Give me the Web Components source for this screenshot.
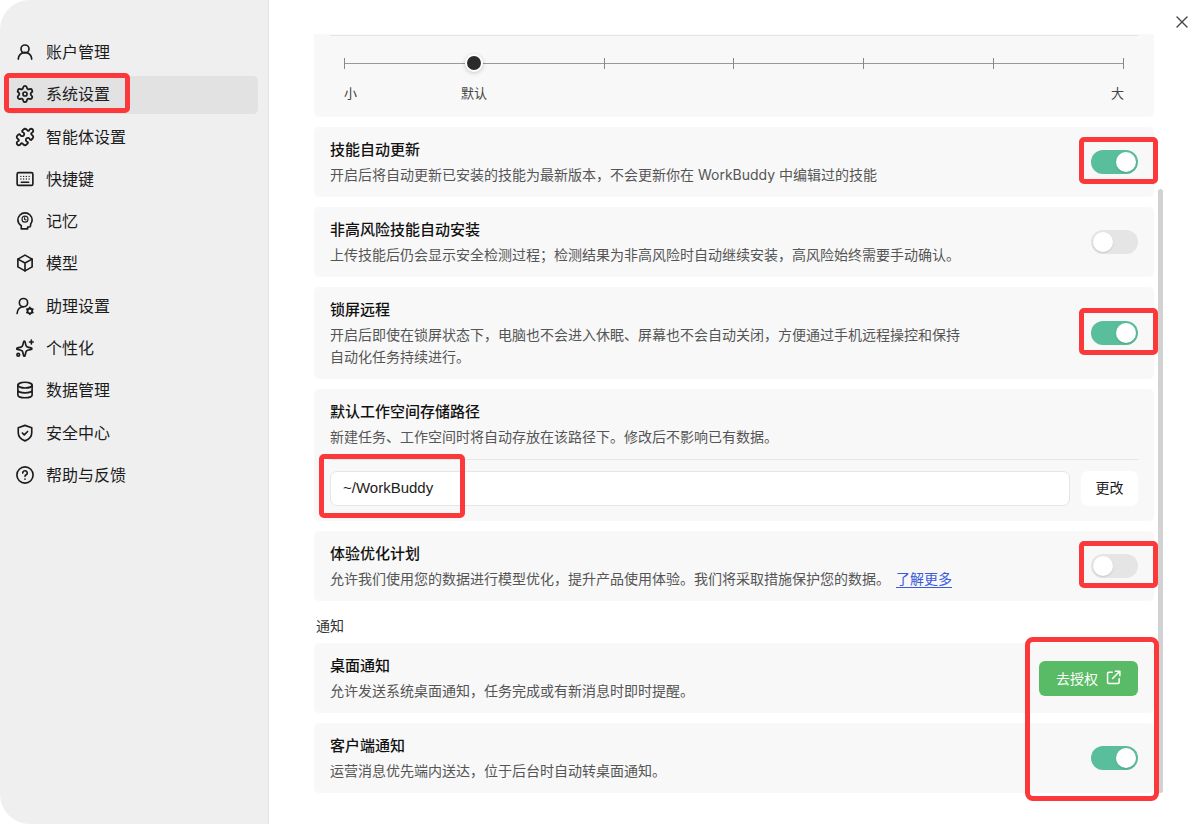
<!DOCTYPE html>
<html lang="zh-CN">
<head>
<meta charset="utf-8">
<meta name="viewport" content="width=device-width, initial-scale=1">
<title>系统设置</title>
<style>
  body { margin: 0; background: #fff; font-family: Inter, "Noto Sans CJK SC", sans-serif; color: #1a1a1a; }
</style>
</head>
<body>
<settings-app></settings-app>
<script>
const ICONS = {
  user: '<circle cx="12" cy="8" r="5.300"/><path d="M3 21.500a9 9 0 0 1 18 0"/>',
  gear: '<path transform="translate(-.96 -.96) scale(1.080)" d="M9.671 4.136a2.340 2.340 0 0 1 4.659 0 2.340 2.340 0 0 0 3.319 1.915 2.340 2.340 0 0 1 2.330 4.033 2.340 2.340 0 0 0 0 3.831 2.340 2.340 0 0 1-2.330 4.033 2.340 2.340 0 0 0-3.319 1.915 2.340 2.340 0 0 1-4.659 0 2.340 2.340 0 0 0-3.320-1.915 2.340 2.340 0 0 1-2.330-4.033 2.340 2.340 0 0 0 0-3.831A2.340 2.340 0 0 1 6.350 6.051a2.340 2.340 0 0 0 3.319-1.915"/><circle cx="12" cy="12" r="2.700"/>',
  puzzle: '<path transform="translate(-1.200 -1.200) scale(1.100)" d="M19.439 7.850c-.049.322.059.648.289.878l1.568 1.568c.470.470.706 1.087.706 1.704s-.235 1.233-.706 1.704l-1.611 1.611a.98.98 0 0 1-.837.276c-.470-.070-.802-.480-.968-.925a2.501 2.501 0 1 0-3.214 3.214c.446.166.855.497.925.968a.979.979 0 0 1-.276.837l-1.610 1.610a2.404 2.404 0 0 1-1.705.707 2.402 2.402 0 0 1-1.704-.706l-1.568-1.568a1.026 1.026 0 0 0-.877-.290c-.493.074-.840.504-1.020.968a2.500 2.500 0 1 1-3.237-3.237c.464-.180.894-.527.967-1.020a1.026 1.026 0 0 0-.289-.877l-1.568-1.568A2.402 2.402 0 0 1 1.998 12c0-.617.236-1.234.706-1.704L4.230 8.770c.240-.240.581-.353.917-.303.515.077.877.528 1.073 1.010a2.500 2.500 0 1 0 3.259-3.259c-.482-.196-.933-.558-1.010-1.073-.050-.336.062-.676.303-.917l1.525-1.525A2.402 2.402 0 0 1 12 1.998c.617 0 1.234.236 1.704.706l1.568 1.568c.230.230.556.338.877.290.493-.074.840-.504 1.020-.968a2.500 2.500 0 1 1 3.237 3.237c-.464.180-.894.527-.967 1.020Z"/>',
  keyboard: '<rect x="1.500" y="3.500" width="21" height="17" rx="2"/><path d="M6.500 8.500h.01M10.200 8.500h.01M13.800 8.500h.01M17.500 8.500h.01M6.500 12h.01M10.200 12h.01M13.800 12h.01M17.500 12h.01M7 16.300h10" stroke-width="1.800"/>',
  memory: '<path d="M7 22.500h8.500V20h2a2 2 0 0 0 2-2v-2c1.300-1.500 2-3.300 2-5.300a9.500 9.500 0 0 0-19 0c0 3 1.500 5.500 4.500 7.500z"/><circle cx="12" cy="9.500" r="4" stroke-width="1.500"/><path d="M11.500 7.500v2.500l2 .5" stroke-width="1.500"/>',
  cube: '<path d="M12 1.500 21.500 6.800v10.400L12 22.500 2.500 17.200V6.800z"/><path d="M2.500 6.800 12 12l9.500-5.200M12 12v10.500"/>',
  helper: '<circle cx="10" cy="7.500" r="5.500"/><path d="M1.500 22c.300-5 3.200-8.500 8-9"/><circle cx="18.500" cy="18.500" r="3.200" stroke-width="2.400"/><path d="M18.500 13.800v1M18.500 22.200v1M14.400 16.200l.9.500M21.700 20.300l.9.500M22.600 16.200l-.9.500M15.300 20.300l-.9.500"/>',
  sparkle: '<path d="M10.100 3.800a1 1 0 0 1 2 0l1.100 4.600a3.200 3.200 0 0 0 2.400 2.400l4.600 1.100a1 1 0 0 1 0 2l-4.600 1.100a3.200 3.200 0 0 0-2.400 2.400l-1.100 4.600a1 1 0 0 1-2 0L9 17.400A3.200 3.200 0 0 0 6.600 15L2 13.900a1 1 0 0 1 0-2l4.600-1.100A3.200 3.200 0 0 0 9 8.400z"/><path d="M20.500 1.500v5M18 4h5"/><circle cx="3" cy="21" r="1.800"/>',
  database: '<ellipse cx="12" cy="5.500" rx="9.500" ry="3.800"/><path d="M2.500 5.500v13c0 2.100 4.200 3.800 9.500 3.800s9.500-1.700 9.500-3.800v-13M2.500 12c0 2.100 4.200 3.800 9.500 3.800s9.500-1.700 9.500-3.800"/>',
  shield: '<path d="M12 1.800 21 5v6.500c0 5.300-3.700 8.800-9 11-5.300-2.200-9-5.700-9-11V5z"/><path d="m8.500 12 2.500 2.500 4.500-4.500"/>',
  help: '<circle cx="12" cy="12" r="10.800"/><path d="M9 9.300a3 3 0 0 1 6 .2c0 2-3 2.300-3 4.300M12 17.400v.1"/>',
  external: '<path d="M10 3.500H4.500a2 2 0 0 0-2 2v14a2 2 0 0 0 2 2h14.500a2 2 0 0 0 2-2V14M15 1.800h7.200V9M22 2 10.500 13.500" stroke-width="2.400"/>',
  close: '<path d="m2 2 20 20M22 2 2 22" stroke-width="2.800"/>'
};

function define(name, css, html, setup) {
  const template = document.createElement('template');
  template.innerHTML = `<style>*{box-sizing:border-box}${css}</style>${html}`;
  customElements.define(name, class extends HTMLElement {
    connectedCallback() {
      if (this.shadowRoot) return;
      this.attachShadow({ mode: 'open' }).append(template.content.cloneNode(true));
      if (setup) setup(this, this.shadowRoot);
    }
  });
}

define('line-icon',
  ':host{display:block;flex:none;width:18px;height:18px}svg{display:block;width:100%;height:100%;overflow:visible}',
  '<svg viewBox="0 0 24 24" fill="none" stroke="currentColor" stroke-width="2.200" stroke-linecap="round" stroke-linejoin="round" aria-hidden="true"></svg>',
  (el, root) => { root.querySelector('svg').innerHTML = ICONS[el.getAttribute('name')]; });

/* Red frame drawn over whatever it wraps. */
define('mark-frame',
  `:host{display:block;position:relative}
   i{position:absolute;inset:var(--frame-inset,-13px -20px -8px -12px);border:5px solid #fb383a;border-radius:5px;pointer-events:none;z-index:2}`,
  '<slot></slot><i></i>');

define('nav-item',
  `:host{display:block}
   a{display:flex;align-items:center;gap:12px;height:38px;padding:0 12px 2px;border-radius:5px;color:#1c1c1c;font-size:16px;line-height:24px;text-decoration:none}
   :host([active]) a{background:#e2e2e2}`,
  '<a href="#"><slot></slot></a>',
  (el, root) => {
    const link = root.querySelector('a');
    const icon = document.createElement('line-icon');
    icon.setAttribute('name', el.getAttribute('icon'));
    link.prepend(icon);
    if (el.hasAttribute('active')) link.setAttribute('aria-current', 'page');
  });

define('side-nav',
  `:host{display:block;flex:none;width:269px;background:#efefef;border-right:1px solid #e3e3e3;border-radius:30px 0 0 30px}
   nav{display:flex;flex-direction:column;justify-content:space-between;min-height:461px;margin:34px 10px 33px 4px}
   mark-frame{--frame-inset:-3px 128px 1px 0}`,
  `<nav aria-label="设置">
    <nav-item icon="user">账户管理</nav-item>
    <mark-frame><nav-item icon="gear" active>系统设置</nav-item></mark-frame>
    <nav-item icon="puzzle">智能体设置</nav-item>
    <nav-item icon="keyboard">快捷键</nav-item>
    <nav-item icon="memory">记忆</nav-item>
    <nav-item icon="cube">模型</nav-item>
    <nav-item icon="helper">助理设置</nav-item>
    <nav-item icon="sparkle">个性化</nav-item>
    <nav-item icon="database">数据管理</nav-item>
    <nav-item icon="shield">安全中心</nav-item>
    <nav-item icon="help">帮助与反馈</nav-item>
  </nav>`);

define('toggle-switch',
  `:host{display:block;width:47px;padding-bottom:2px}
   input{appearance:none;display:flex;align-items:center;width:100%;height:24px;margin:0;padding:0 2px;border-radius:12px;background:#e5e5e5;cursor:pointer}
   input::before{content:"";width:20px;height:20px;border-radius:50%;background:#fff;box-shadow:0 1px 2px #0002}
   input:checked{background:#58be9b;justify-content:flex-end}`,
  '<input type="checkbox" role="switch">',
  (el, root) => {
    const input = root.querySelector('input');
    input.checked = el.hasAttribute('on');
    input.setAttribute('aria-label', el.getAttribute('label'));
  });

define('setting-card',
  `:host{display:block;padding:12px 16px 11px;background:#f8f8f8;border-radius:5px}
   .row{display:flex;align-items:center;justify-content:space-between;gap:16px}
   .text{max-width:640px}
   h3{margin:0 0 3px;font-size:15px;line-height:22px;font-weight:500;color:#111}
   p{margin:0;font-size:14px;line-height:22px;color:#555}`,
  `<div class="row"><div class="text"><h3></h3><p><slot></slot></p></div><slot name="action"></slot></div><slot name="extra"></slot>`,
  (el, root) => { root.querySelector('h3').textContent = el.getAttribute('heading'); });

define('size-slider',
  `:host{display:block;padding:1px 16px 14px;background:#f8f8f8;border-radius:0 0 5px 5px}
   .body{border-top:1px solid #e6e6e6;padding:18px 14px 0}
   .scale{position:relative;height:18px}
   .ticks{display:flex;justify-content:space-between;align-items:center;height:100%;background:linear-gradient(#999,#999) center/100% 1px no-repeat}
   .ticks i{width:1px;height:11px;background:#888}
   input{appearance:none;position:absolute;inset:0 -9px;width:calc(100% + 18px);height:18px;margin:0;background:none}
   input::-webkit-slider-thumb{appearance:none;width:18px;height:18px;border:2px solid #fff;border-radius:50%;background:#2b2b2e;box-shadow:0 1px 4px #0003}
   .labels{display:grid;grid-template-columns:1fr 2fr 8fr 1fr;margin-top:11px;font-size:13px;line-height:20px;color:#444}
   .labels span:nth-child(2){text-align:center}
   .labels span:last-child{text-align:right}`,
  `<div class="body"><div class="scale"><div class="ticks"><i></i><i></i><i></i><i></i><i></i><i></i><i></i></div>
   <input type="range" min="0" max="6" value="1" aria-label="字体大小"></div>
   <div class="labels"><span>小</span><span>默认</span><span></span><span>大</span></div></div>`);

define('path-field',
  `:host{display:flex;gap:11px;margin-top:11px;padding:11px 0 4px;border-top:1px solid #e6e6e6}
   input,button{height:35px;border-radius:7px;background:#fff;color:#1c1c1c}
   input{display:block;width:100%;padding:0 12px 2px;border:1px solid #e6e6e6;font:15px/22px "Liberation Sans",sans-serif}
   mark-frame{flex:1;--frame-inset:-17px 605px -12px -11px}
   button{flex:none;width:57px;padding:0 0 3px;border:0;font:inherit;font-size:14px}`,
  '<mark-frame><input type="text" value="~/WorkBuddy" aria-label="默认工作空间存储路径"></mark-frame><button type="button">更改</button>');

define('grant-button',
  `:host{display:block;flex:none}
   button{display:flex;align-items:center;justify-content:center;gap:8px;width:99px;height:35px;padding:0 0 2px;border:0;border-radius:6px;background:#5abb66;color:#fff;font:inherit;font-size:14px}
   line-icon{width:15px;height:15px}`,
  '<button type="button"><slot></slot><line-icon name="external"></line-icon></button>');

define('notice-group',
  `:host{display:block}
   h2{margin:0;padding:14px 2px 6px;font-size:14px;line-height:22px;font-weight:400;color:#333}
   .cards{position:relative;display:flex;flex-direction:column;gap:10px}
   i{position:absolute;top:-6px;right:-5px;bottom:-8px;width:134px;border:5px solid #fb383a;border-radius:8px;pointer-events:none;z-index:2}`,
  '<h2>通知</h2><div class="cards"><slot></slot><i></i></div>');

define('settings-app',
  `:host{display:flex;min-height:100vh}
   main{flex:1;min-width:0;display:flex;flex-direction:column}
   header{display:flex;justify-content:flex-end;height:34px;padding:12px 8px 0 0}
   header button{display:grid;place-items:center;width:20px;height:20px;padding:0;border:0;background:none;color:#444}
   header line-icon{width:12px;height:12px}
   .scroller{display:flex;gap:4px;padding:0 38px 30px 45px}
   .list{flex:1;min-width:0;display:flex;flex-direction:column;gap:10px}
   notice-group{margin-top:-10px}
   .bar{width:5px;margin:155px -1px 0 0;border-radius:3px;background:#d2d2d2}
   a{margin-left:6px;color:#3b5bdb;text-underline-offset:3px}`,
  `<side-nav></side-nav>
   <main>
    <header><button type="button" aria-label="关闭"><line-icon name="close"></line-icon></button></header>
    <div class="scroller">
     <div class="list">
      <size-slider></size-slider>
      <setting-card heading="技能自动更新">开启后将自动更新已安装的技能为最新版本，不会更新你在 WorkBuddy 中编辑过的技能
        <mark-frame slot="action"><toggle-switch on label="技能自动更新"></toggle-switch></mark-frame></setting-card>
      <setting-card heading="非高风险技能自动安装">上传技能后仍会显示安全检测过程；检测结果为非高风险时自动继续安装，高风险始终需要手动确认。
        <toggle-switch slot="action" label="非高风险技能自动安装"></toggle-switch></setting-card>
      <setting-card heading="锁屏远程">开启后即使在锁屏状态下，电脑也不会进入休眠、屏幕也不会自动关闭，方便通过手机远程操控和保持自动化任务持续进行。
        <mark-frame slot="action"><toggle-switch on label="锁屏远程"></toggle-switch></mark-frame></setting-card>
      <setting-card heading="默认工作空间存储路径">新建任务、工作空间时将自动存放在该路径下。修改后不影响已有数据。
        <path-field slot="extra"></path-field></setting-card>
      <setting-card heading="体验优化计划">允许我们使用您的数据进行模型优化，提升产品使用体验。我们将采取措施保护您的数据。<a href="#">了解更多</a>
        <mark-frame slot="action"><toggle-switch label="体验优化计划"></toggle-switch></mark-frame></setting-card>
      <notice-group>
       <setting-card heading="桌面通知">允许发送系统桌面通知，任务完成或有新消息时即时提醒。
        <grant-button slot="action">去授权</grant-button></setting-card>
       <setting-card heading="客户端通知">运营消息优先端内送达，位于后台时自动转桌面通知。
        <toggle-switch slot="action" on label="客户端通知"></toggle-switch></setting-card>
      </notice-group>
     </div>
     <div class="bar" aria-hidden="true"></div>
    </div>
   </main>`);
</script>
</body>
</html>
